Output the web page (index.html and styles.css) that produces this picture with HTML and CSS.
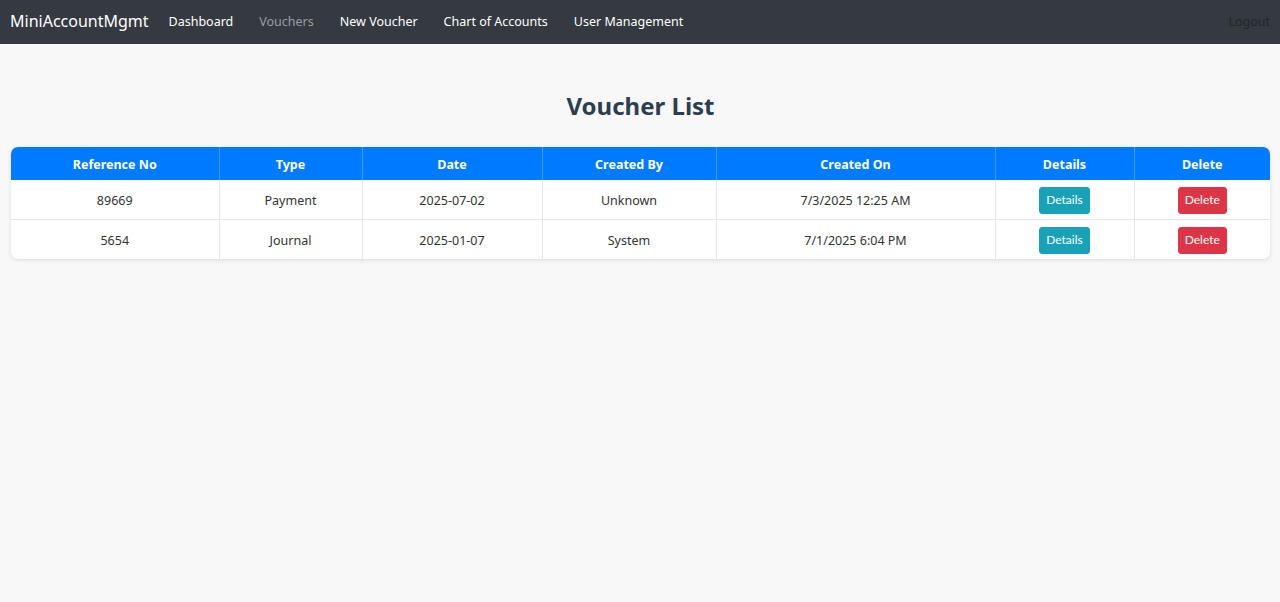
FILE: index.html
```html
<!DOCTYPE html>
<html lang="en">
<head>
<meta charset="utf-8">
<title>Voucher List</title>
<link rel="stylesheet" href="styles.css">
</head>
<body>
<nav class="navbar">
  <a class="brand" href="#">MiniAccountMgmt</a>
  <ul class="nav-links">
    <li><a href="#">Dashboard</a></li>
    <li><a href="#" class="muted">Vouchers</a></li>
    <li><a href="#">New Voucher</a></li>
    <li><a href="#">Chart of Accounts</a></li>
    <li><a href="#">User Management</a></li>
  </ul>
  <a class="logout" href="#">Logout</a>
</nav>
<main class="content">
  <h2 class="title">Voucher List</h2>
  <div class="card">
    <table class="vtable">
      <colgroup>
        <col class="c1"><col class="c2"><col class="c3"><col class="c4"><col class="c5"><col class="c6"><col class="c7">
      </colgroup>
      <thead>
        <tr>
          <th>Reference No</th><th>Type</th><th>Date</th><th>Created By</th><th>Created On</th><th>Details</th><th>Delete</th>
        </tr>
      </thead>
      <tbody>
        <tr>
          <td>89669</td><td>Payment</td><td>2025-07-02</td><td>Unknown</td><td>7/3/2025 12:25 AM</td>
          <td><a class="btn btn-info" href="#">Details</a></td>
          <td><button class="btn btn-danger">Delete</button></td>
        </tr>
        <tr>
          <td>5654</td><td>Journal</td><td>2025-01-07</td><td>System</td><td>7/1/2025 6:04 PM</td>
          <td><a class="btn btn-info" href="#">Details</a></td>
          <td><button class="btn btn-danger">Delete</button></td>
        </tr>
      </tbody>
    </table>
  </div>
</main>
</body>
</html>
```
FILE: styles.css
```css
* { box-sizing: border-box; }
html, body { margin: 0; padding: 0; }
body {
  background: #f8f8f8;
  font-family: "Noto Sans", "Open Sans", sans-serif;
  color: #212529;
  height: 602px;
}
.navbar {
  display: flex;
  align-items: center;
  height: 44px;
  background: #343a40;
  padding: 0 10px 2px 10px;
}
.brand {
  color: #fff;
  text-decoration: none;
  font-size: 16px;
  margin-right: 7px;
}
.nav-links {
  display: flex;
  list-style: none;
  margin: 0;
  padding: 0;
  flex: 1;
}
.nav-links a {
  display: block;
  color: #fff;
  text-decoration: none;
  font-size: 12.5px;
  padding: 0 13px;
}
.nav-links a.muted { color: #9a9da0; }
.logout {
  color: #22262b;
  text-decoration: none;
  font-size: 12.5px;
}
.content {
  padding: 0 10px 0 11px;
}
.title {
  margin: 0;
  padding-top: 45px;
  padding-bottom: 24px;
  text-align: center;
  font-size: 24px;
  line-height: 34px;
  font-weight: 700;
  color: #2c3e50;
}
.card {
  background: #fff;
  border-radius: 7px;
  box-shadow: 0 1px 4px rgba(0,0,0,0.12);
  overflow: hidden;
}
.vtable {
  width: 100%;
  border-collapse: collapse;
  table-layout: fixed;
  font-size: 12.5px;
}
.c1 { width: 208px; }
.c2 { width: 143px; }
.c3 { width: 180px; }
.c4 { width: 174px; }
.c5 { width: 279px; }
.c6 { width: 139px; }
.c7 { width: auto; }
.vtable th {
  background: #007bff;
  color: #fff;
  font-weight: 700;
  font-size: 12.5px;
  height: 33px;
  padding: 0;
  padding-top: 2px;
  text-align: center;
  border-left: 1px solid #3d9bff;
}
.vtable th:first-child, .vtable td:first-child { border-left: none; }
.vtable td {
  height: 40px;
  padding: 0;
  padding-top: 2px;
  text-align: center;
  color: #333;
  border-left: 1px solid #e3e6ea;
  border-top: 1px solid #e3e6ea;
}
.vtable tbody tr:first-child td { border-top: none; height: 39px; }
.btn {
  display: inline-block;
  font-family: Lato, "Noto Sans", sans-serif;
  font-size: 12px;
  line-height: 16px;
  padding: 4px 6px 5px;
  border: 1px solid transparent;
  border-radius: 3px;
  color: #fff;
  text-decoration: none;
  cursor: pointer;
  vertical-align: middle;
}
.btn-info { background: #17a2b8; border-color: #17a2b8; }
.btn-danger { background: #dc3545; border-color: #dc3545; }
```
